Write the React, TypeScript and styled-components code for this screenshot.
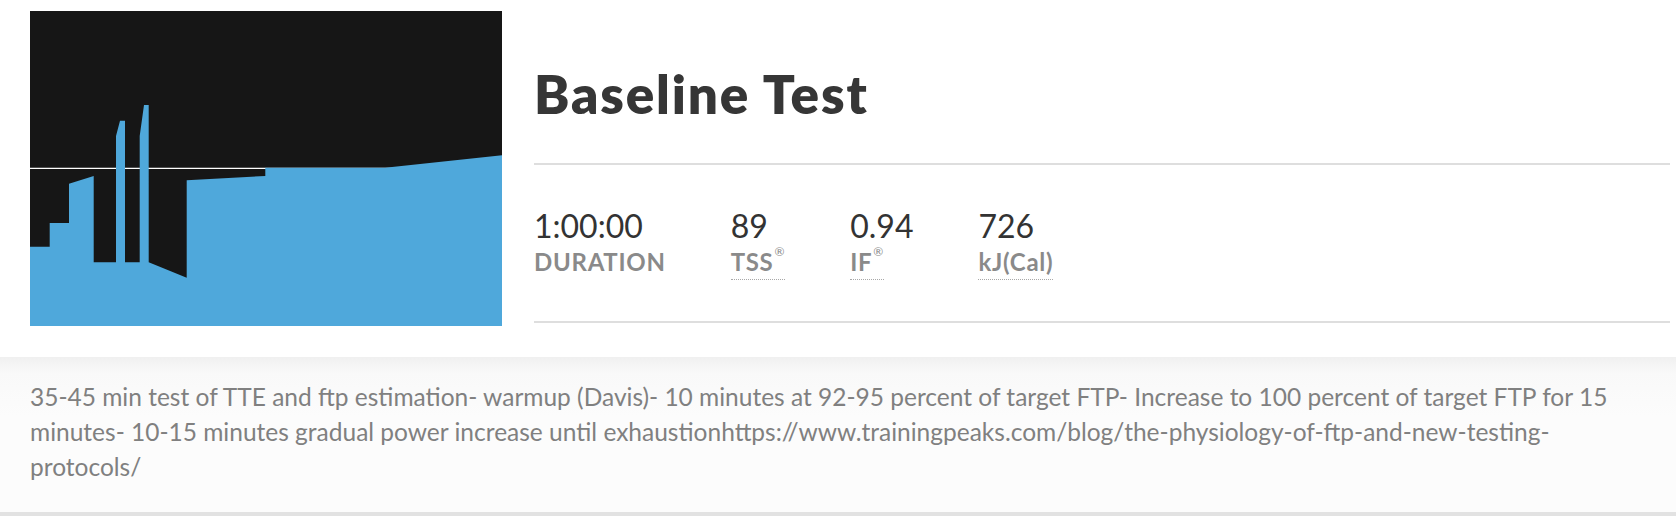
import styled, { createGlobalStyle } from "styled-components";

const GlobalStyle = createGlobalStyle`
  html, body {
    margin: 0;
    padding: 0;
    background: #ffffff;
  }
  body {
    font-family: "Lato", "Liberation Sans", sans-serif;
  }
`;

interface Stat {
  value: string;
  label: string;
  registered?: boolean;
  dotted?: boolean;
}

const STATS: Stat[] = [
  { value: "1:00:00", label: "DURATION" },
  { value: "89", label: "TSS", registered: true, dotted: true },
  { value: "0.94", label: "IF", registered: true, dotted: true },
  { value: "726", label: "kJ(Cal)", dotted: true },
];

const DESCRIPTION =
  "35-45 min test of TTE and ftp estimation- warmup (Davis)- 10 minutes at 92-95 percent of target FTP- Increase to 100 percent of target FTP for 15 minutes- 10-15 minutes gradual power increase until exhaustionhttps://www.trainingpeaks.com/blog/the-physiology-of-ftp-and-new-testing-protocols/";

// power profile, in chart px (472 x 315)
const PROFILE = [
  [0, 235.7],
  [19.7, 235.7],
  [19.7, 212],
  [39, 212],
  [39, 172.7],
  [63.7, 165],
  [63.7, 251.3],
  [86, 251.3],
  [86, 125],
  [90, 109.7],
  [95, 109.7],
  [95, 251.3],
  [109.7, 251.3],
  [109.7, 125],
  [114, 94],
  [118.7, 94],
  [118.7, 251.3],
  [156.7, 266.7],
  [156.7, 169.3],
  [235.3, 165],
  [235.3, 156.7],
  [355, 156.7],
  [472, 144.3],
  [472, 315],
  [0, 315],
];

const WorkoutChart = () => (
  <ChartFrame>
    <svg width="472" height="315" viewBox="0 0 472 315">
      <rect x="0" y="0" width="472" height="315" fill="#161616" />
      <line x1="0" y1="157.4" x2="472" y2="157.4" stroke="#ffffff" strokeWidth="1.2" />
      <polygon points={PROFILE.map((p) => p.join(",")).join(" ")} fill="#4fa8db" />
    </svg>
  </ChartFrame>
);

const App = () => {
  return (
    <>
      <GlobalStyle />
      <Page>
        <Header>
          <WorkoutChart />
          <Info>
            <TitleBox>
              <Title>Baseline Test</Title>
            </TitleBox>
            <StatsRow>
              {STATS.map((s) => (
                <StatItem key={s.label}>
                  <StatValue>{s.value}</StatValue>
                  <StatLabel dotted={s.dotted}>
                    {s.label}
                    {s.registered && <Reg>®</Reg>}
                  </StatLabel>
                </StatItem>
              ))}
            </StatsRow>
          </Info>
        </Header>
        <Description>{DESCRIPTION}</Description>
      </Page>
    </>
  );
};

const Page = styled.div`
  width: 1676px;
  display: flex;
  flex-direction: column;
`;

const Header = styled.div`
  display: flex;
  align-items: flex-start;
  gap: 32px;
  padding: 11px 6px 0 30px;
`;

const ChartFrame = styled.div`
  width: 472px;
  height: 315px;
  flex-shrink: 0;
  svg {
    display: block;
  }
`;

const Info = styled.div`
  flex: 1;
  display: flex;
  flex-direction: column;
`;

const TitleBox = styled.div`
  padding: 51px 0 37px 0;
  border-bottom: 2px solid #dedede;
`;

const Title = styled.h1`
  margin: 0;
  font-size: 53px;
  line-height: 64px;
  font-weight: 800;
  letter-spacing: 0.035em;
  color: #363636;
`;

const StatsRow = styled.div`
  display: flex;
  gap: 65px;
  padding: 41px 0 41px 0;
  border-bottom: 2px solid #dedede;
`;

const StatItem = styled.div`
  display: flex;
  flex-direction: column;
  align-items: flex-start;
`;

const StatValue = styled.div`
  font-size: 32px;
  line-height: 40px;
  color: #333333;
`;

const StatLabel = styled.div<{ dotted?: boolean }>`
  margin-top: 2px;
  font-size: 24px;
  line-height: 28px;
  font-weight: 700;
  letter-spacing: 0.03em;
  color: #8a8a8a;
  padding-bottom: 3px;
  border-bottom: 1px dotted ${({ dotted }) => (dotted ? "#a8a8a8" : "transparent")};
`;

const Reg = styled.sup`
  font-size: 12px;
  font-weight: 400;
  vertical-align: top;
  line-height: 12px;
  margin-left: 1px;
  position: relative;
  top: -2px;
`;

const Description = styled.div`
  margin-top: 31px;
  padding: 22px 50px 28px 30px;
  font-size: 24.5px;
  line-height: 35px;
  color: #808080;
  background: linear-gradient(180deg, #f0f0f0 0px, #f9f9f9 16px, #fcfcfc 60px);
  border-bottom: 4px solid #e2e2e2;
  overflow-wrap: break-word;
`;

export default App;
